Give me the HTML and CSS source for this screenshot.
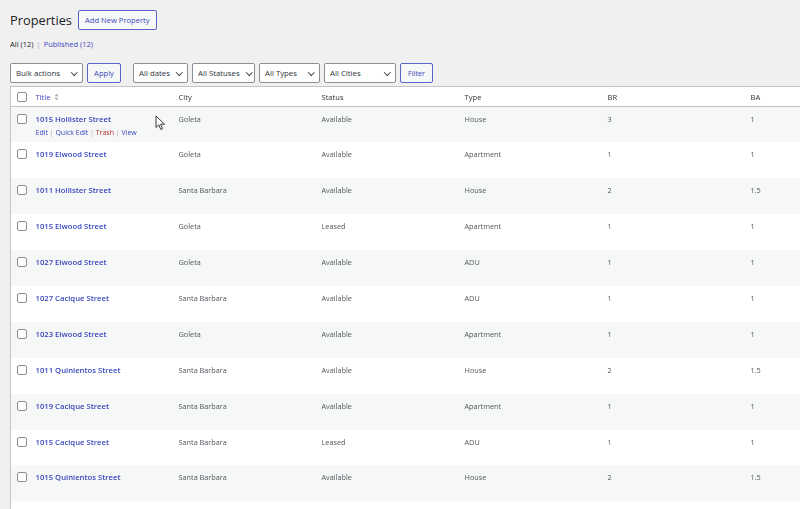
FILE: index.html
```html
<!DOCTYPE html>
<html lang="en">

<head>
    <meta charset="UTF-8">
    <title>Properties</title>
    <link rel="stylesheet" href="styles.css">
</head>

<body>
    <div class="wrap">
        <div class="page-head">
            <h1>Properties</h1>
            <a class="btn" href="#">Add New Property</a>
        </div>

        <ul class="subsubsub">
            <li class="current">All <span class="count">(12)</span></li>
            <li class="sep">|</li>
            <li><a href="#">Published <span class="count">(12)</span></a></li>
        </ul>

        <div class="tablenav">
            <div class="select w-bulk">Bulk actions <span class="caret"></span></div>
            <a class="btn btn-apply" href="#">Apply</a>
            <div class="select w-dates">All dates <span class="caret"></span></div>
            <div class="select w-status">All Statuses <span class="caret"></span></div>
            <div class="select w-types">All Types <span class="caret"></span></div>
            <div class="select w-cities">All Cities <span class="caret"></span></div>
            <a class="btn btn-filter" href="#">Filter</a>
        </div>

        <table class="list">
            <thead>
                <tr>
                    <th class="cb"><span class="check"></span></th>
                    <th><a href="#">Title</a>
                        <svg class="sort" width="5" height="8" viewBox="0 0 5 8">
                            <path d="M0.5 3.2 L2.5 0.8 L4.5 3.2 Z M0.5 4.8 L2.5 7.2 L4.5 4.8 Z" fill="#a7aaad"/>
                        </svg>
                    </th>
                    <th>City</th>
                    <th>Status</th>
                    <th>Type</th>
                    <th>BR</th>
                    <th>BA</th>
                </tr>
            </thead>
            <tbody id="rows"></tbody>
        </table>

        <svg class="cursor" width="11" height="16" viewBox="0 0 11 16">
            <path d="M1 1 L1 12.5 L3.8 9.8 L5.8 14.5 L7.6 13.7 L5.6 9.2 L9.5 9.2 Z" fill="#fff" stroke="#222" stroke-width="0.9" stroke-linejoin="round"/>
        </svg>
    </div>

    <script>
        var properties = [
            ['1015 Hollister Street', 'Goleta', 'Available', 'House', '3', '1'],
            ['1019 Elwood Street', 'Goleta', 'Available', 'Apartment', '1', '1'],
            ['1011 Hollister Street', 'Santa Barbara', 'Available', 'House', '2', '1.5'],
            ['1015 Elwood Street', 'Goleta', 'Leased', 'Apartment', '1', '1'],
            ['1027 Elwood Street', 'Goleta', 'Available', 'ADU', '1', '1'],
            ['1027 Cacique Street', 'Santa Barbara', 'Available', 'ADU', '1', '1'],
            ['1023 Elwood Street', 'Goleta', 'Available', 'Apartment', '1', '1'],
            ['1011 Quinientos Street', 'Santa Barbara', 'Available', 'House', '2', '1.5'],
            ['1019 Cacique Street', 'Santa Barbara', 'Available', 'Apartment', '1', '1'],
            ['1015 Cacique Street', 'Santa Barbara', 'Leased', 'ADU', '1', '1'],
            ['1015 Quinientos Street', 'Santa Barbara', 'Available', 'House', '2', '1.5']
        ];

        var tbody = document.getElementById('rows');
        for (var i = 0; i < properties.length; i++) {
            var p = properties[i];
            var tr = document.createElement('tr');
            var html = '<td class="cb"><span class="check"></span></td>' +
                '<td class="title"><a class="row-title" href="#">' + p[0] + '</a>';
            if (i === 0) {
                html += '<div class="row-actions"><a href="#">Edit</a> | <a href="#">Quick Edit</a> | ' +
                    '<a class="trash" href="#">Trash</a> | <a href="#">View</a></div>';
            }
            html += '</td>';
            for (var j = 1; j < p.length; j++) {
                html += '<td>' + p[j] + '</td>';
            }
            tr.innerHTML = html;
            tbody.appendChild(tr);
        }

        // 12th row sits below the fold, only its top edge shows
        var last = document.createElement('tr');
        last.innerHTML = '<td class="cb"></td><td></td><td></td><td></td><td></td><td></td><td></td>';
        tbody.appendChild(last);
    </script>
</body>

</html>
```

FILE: styles.css
```css
html,
body {
    margin: 0;
    overflow: hidden;
}

body {
    background: #f0f0f1;
    color: #3c434a;
    font-family: "Open Sans", "Noto Sans", sans-serif;
    font-size: 8px;
}

a {
    color: #3a47bd;
    text-decoration: none;
}

.wrap {
    position: relative;
    padding: 10px 0 0 10px;
    width: 1000px;
}

.page-head {
    display: flex;
    align-items: center;
    gap: 6px;
    height: 20px;
}

h1 {
    margin: 0;
    font-size: 12.8px;
    font-weight: 400;
    color: #1d2327;
}

.btn {
    display: inline-flex;
    align-items: center;
    box-sizing: border-box;
    height: 20px;
    padding: 0 6px;
    border: 1px solid #5a63c8;
    border-radius: 2px;
    background: #f6f7f7;
    color: #3a47bd;
    font-size: 7.6px;
}

.subsubsub {
    list-style: none;
    margin: 9px 0 0;
    padding: 0;
    display: flex;
    gap: 3px;
    color: #646970;
    font-size: 7.5px;
}

.subsubsub .current {
    color: #1d2327;
}

.subsubsub .sep {
    color: #a7aaad;
}

.tablenav {
    display: flex;
    align-items: center;
    gap: 4px;
    margin-top: 14px;
    height: 20px;
}

.select {
    position: relative;
    box-sizing: border-box;
    height: 20px;
    line-height: 18px;
    padding: 0 0 0 5px;
    border: 1px solid #8c8f94;
    border-radius: 2px;
    background: #fff;
    color: #2c3338;
    font-size: 7.8px;
}

.caret {
    position: absolute;
    right: 6px;
    top: 6px;
    width: 3.5px;
    height: 3.5px;
    border-right: 1.3px solid #3c434a;
    border-bottom: 1.3px solid #3c434a;
    transform: rotate(45deg);
}

.w-bulk { width: 73px; }
.w-dates { width: 55px; margin-left: 8px; }
.w-status { width: 63px; }
.w-status .caret { right: 3px; }
.w-types { width: 61px; }
.w-cities { width: 72px; }

.btn-apply { width: 34px; justify-content: center; }
.btn-filter { width: 33px; justify-content: center; font-size: 7.2px; }

.list {
    margin-top: 3px;
    border-collapse: collapse;
    border: 1px solid #c3c4c7;
    background: #fff;
    table-layout: fixed;
    width: 877px;
    will-change: transform;
}

.list th,
.list td {
    width: 143px;
    box-sizing: border-box;
    padding: 0 7px;
    text-align: left;
    vertical-align: top;
}

.list th {
    height: 20px;
    vertical-align: middle;
    font-weight: 400;
    font-size: 7.6px;
    color: #2c3338;
    border-bottom: 1px solid #c3c4c7;
}

.list td {
    height: 35.9px;
    padding-top: 6px;
    color: #50575e;
    font-size: 7.3px;
    line-height: 12px;
}

.list tbody tr:nth-child(odd) {
    background: #f6f7f7;
}

.list .cb {
    width: 18px;
    padding: 0 0 0 6px;
}

.list td.cb {
    padding-top: 7px;
}

.check {
    display: block;
    width: 10px;
    height: 10px;
    box-sizing: border-box;
    border: 1px solid #8c8f94;
    border-radius: 2px;
    background: #fff;
}

.row-title {
    font-weight: 600;
    font-size: 7.7px;
}

.row-actions {
    color: #a7aaad;
    font-size: 7px;
    line-height: 12px;
    margin-top: 2px;
}

.row-actions .trash {
    color: #b32d2e;
}

.sort {
    vertical-align: middle;
    margin-left: 2px;
}

.cursor {
    position: absolute;
    left: 155px;
    top: 115px;
}
```
